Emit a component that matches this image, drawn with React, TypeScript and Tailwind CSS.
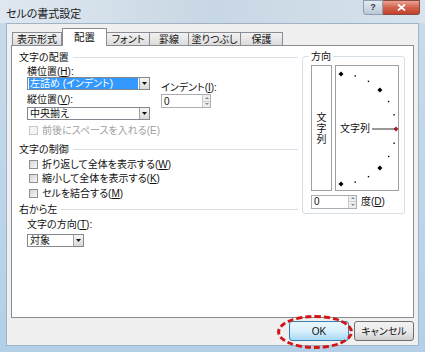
import React from 'react'

const U = ({ children }: { children: React.ReactNode }) => <span className="underline">{children}</span>

const Arrow = () => (
  <div className="w-[10px] h-full flex items-center justify-center bg-gradient-to-b from-[#f6f6f6] to-[#d9d9d9] border-l border-[#a0a0a0]">
    <svg width="5" height="3" viewBox="0 0 5 3"><path d="M0 0H5L2.5 3Z" fill="#111" /></svg>
  </div>
)

const Combo = ({ w, text, selected }: { w: string; text: string; selected?: boolean }) => (
  <div className={`${w} h-[13px] flex border border-[#828790] bg-white`}>
    <div className="flex-1 flex items-center px-[1px]">
      <div className={`h-full flex-1 flex items-center pl-[1px] ${selected ? 'bg-[#3399ff] text-white' : ''}`}>{text}</div>
    </div>
    <Arrow />
  </div>
)

const Spin = ({ w }: { w: string }) => (
  <div className={`${w} h-[14px] flex border border-[#abadb3] bg-white`}>
    <div className="flex-1 flex items-center pl-[2px]">0</div>
    <div className="w-[8px] flex flex-col border-l border-[#c8c8c8] bg-[#eeeeee]">
      <div className="flex-1 flex items-center justify-center border-b border-[#cfcfcf]">
        <svg width="4" height="2" viewBox="0 0 4 2"><path d="M0 2H4L2 0Z" fill="#7a8a99" /></svg>
      </div>
      <div className="flex-1 flex items-center justify-center">
        <svg width="4" height="2" viewBox="0 0 4 2"><path d="M0 0H4L2 2Z" fill="#7a8a99" /></svg>
      </div>
    </div>
  </div>
)

const Check = ({ children, disabled, className }: { children: React.ReactNode; disabled?: boolean; className: string }) => (
  <div className={`${className} h-[12px] flex items-center pl-[2px] ${disabled ? 'text-[#a0a0a0]' : ''}`}>
    <div className={`w-[9px] h-[9px] border ${disabled ? 'border-[#c8c8c8] bg-[#f4f4f4]' : 'border-[#8f8f8f] bg-gradient-to-br from-[#d4d4d4] to-[#f8f8f8]'}`} />
    <span className="ml-[4px]">{children}</span>
  </div>
)

const Header = ({ text, className }: { text: string; className: string }) => (
  <div className={`${className} h-[12px] flex items-center`}>
    <span>{text}</span>
    <div className="flex-1 h-px bg-[#d5dfe5] ml-[4px] mr-[4px]" />
  </div>
)

const Dial = () => {
  const cx = 5
  const cy = 63
  const r = 55
  const pts = [90, 75, 60, 45, 30, 15, 0, -15, -30, -45, -60, -75, -90].map((a) => {
    const rad = (a * Math.PI) / 180
    return { a, x: cx + r * Math.cos(rad), y: cy - r * Math.sin(rad) }
  })
  return (
    <svg className="absolute inset-0" width="64" height="126" viewBox="0 0 64 126">
      <line x1="36" y1="63" x2="59" y2="63" stroke="#333" strokeWidth="1" />
      {pts.map((p) =>
        p.a % 45 === 0 ? (
          <path
            key={p.a}
            d={`M${p.x} ${p.y - 2.5}L${p.x + 2.5} ${p.y}L${p.x} ${p.y + 2.5}L${p.x - 2.5} ${p.y}Z`}
            fill={p.a === 0 ? '#a02020' : '#000'}
          />
        ) : (
          <rect key={p.a} x={p.x - 0.7} y={p.y - 0.7} width="1.4" height="1.4" fill="#000" />
        )
      )}
    </svg>
  )
}

export default function App() {
  const tabs = [
    { t: '表示形式', w: 'w-[50px]' },
    { t: '配置', w: 'w-[45px]', sel: true },
    { t: 'フォント', w: 'w-[44px]' },
    { t: '罫線', w: 'w-[40px]' },
    { t: '塗りつぶし', w: 'w-[53px]' },
    { t: '保護', w: 'w-[43px]' },
  ]

  return (
    <div className="w-[425px] h-[352px] flex flex-col bg-gradient-to-b from-[#c9dbea] to-[#b3d0e8] font-['Liberation_Sans','Noto_Sans_CJK_JP',sans-serif] [font-feature-settings:'palt'] text-[10px] text-[#111] overflow-hidden">
      {/* タイトルバー */}
      <div className="h-[23px] flex items-start bg-gradient-to-r from-[#dfe8f0] via-[#c8d7e4] to-[#d7e3ee]">
        <div className="pl-[6px] pt-[6px] text-[11px] text-[#1a1a1a]">セルの書式設定</div>
        <div className="ml-auto mr-[5px] flex">
          <div className="w-[20px] h-[15px] flex items-center justify-center rounded-bl-[3px] border border-[#8a9cae] bg-gradient-to-b from-[#e4ebf2] to-[#b9c9d8] text-[9px] text-[#334] font-bold">?</div>
          <div className="w-[37px] h-[15px] flex items-center justify-center rounded-br-[3px] border border-l-0 border-[#8a4a40] bg-gradient-to-b from-[#e8a393] via-[#d2624e] to-[#c2402c]">
            <svg width="9" height="7" viewBox="0 0 9 7"><path d="M1 0.5L8 6.5M8 0.5L1 6.5" stroke="#fff" strokeWidth="1.8" /></svg>
          </div>
        </div>
      </div>

      {/* 本体 */}
      <div className="mx-[6px] mb-[6px] flex-1 flex flex-col bg-[#f0f0f0] border border-[#9fb3c6] relative">
        <div className="mt-[4px] pl-[5px] h-[17px] flex items-end relative z-10">
          {tabs.map((tab) => (
            <div
              key={tab.t}
              className={`${tab.w} flex items-center justify-center border border-[#898c95] ${
                tab.sel ? 'h-[18px] -mb-px bg-white border-b-0 text-[10.5px]' : 'h-[13px] border-b-0 bg-gradient-to-b from-[#f2f2f2] to-[#dcdcdc] -ml-px first:ml-0'
              }`}
            >
              {tab.t}
            </div>
          ))}
        </div>

        <div className="mx-[4px] h-[273px] flex bg-white border border-[#898c95]">
          {/* 左側 */}
          <div className="flex-1 flex flex-col pl-[7px]">
            <Header text="文字の配置" className="mt-[5px]" />
            <div className="flex pl-[8px]">
              <div className="flex flex-col w-[123px]">
                <div className="mt-[2px] h-[12px] flex items-center">横位置(<U>H</U>):</div>
                <Combo w="w-[123px]" text="左詰め (インデント)" selected />
                <div className="mt-[3px] h-[12px] flex items-center">縦位置(<U>V</U>):</div>
                <div className="mt-[2px]">
                  <Combo w="w-[123px]" text="中央揃え" />
                </div>
              </div>
              <div className="flex flex-col ml-[11px] mt-[18px]">
                <div className="h-[12px] flex items-center">インデント(<U>I</U>):</div>
                <div className="mt-[1px]">
                  <Spin w="w-[50px]" />
                </div>
              </div>
            </div>
            <div className="pl-[8px] flex flex-col">
              <Check className="mt-[4px]" disabled>前後にスペースを入れる(E)</Check>
            </div>
            <Header text="文字の制御" className="mt-[7px]" />
            <div className="pl-[8px] flex flex-col">
              <Check className="mt-[3px]">折り返して全体を表示する(<U>W</U>)</Check>
              <Check className="mt-[2px]">縮小して全体を表示する(<U>K</U>)</Check>
              <Check className="mt-[3px]">セルを結合する(<U>M</U>)</Check>
            </div>
            <Header text="右から左" className="mt-[4px]" />
            <div className="pl-[8px] flex flex-col">
              <div className="mt-[3px] h-[12px] flex items-center">文字の方向(<U>T</U>):</div>
              <div className="mt-[4px]">
                <Combo w="w-[57px]" text="対象" />
              </div>
            </div>
          </div>

          {/* 方向 */}
          <div className="w-[103px] mr-[8px] mt-[10px] self-start relative border border-[#d5dfe5] rounded-[3px] pt-[8px] pl-[8px] pr-[5px] pb-[4px]">
            <div className="absolute -top-[7px] left-[6px] px-[2px] bg-white h-[12px] flex items-center">方向</div>
            <div className="flex gap-[3px]">
              <div className="w-[21px] h-[126px] border border-[#a0a0a0] flex flex-col items-center justify-center leading-[11px]">
                <span>文</span>
                <span>字</span>
                <span>列</span>
              </div>
              <div className="w-[64px] h-[126px] border border-[#a0a0a0] relative flex items-center pl-[4px]">
                <Dial />
                <span className="relative">文字列</span>
              </div>
            </div>
            <div className="mt-[3px] flex items-center">
              <Spin w="w-[46px]" />
              <span className="ml-[4px]">度(<U>D</U>)</span>
            </div>
          </div>
        </div>

        {/* ボタン */}
        <div className="mt-[3px] pr-[4px] flex justify-end gap-[5px]">
          <div className="w-[60px] h-[20px] flex items-center justify-center rounded-[3px] border border-[#3c7fb1] bg-gradient-to-b from-[#eaf6fd] via-[#d9f0fc] to-[#a7d9f5]">OK</div>
          <div className="w-[60px] h-[20px] flex items-center justify-center rounded-[3px] border border-[#707070] bg-gradient-to-b from-[#f2f2f2] via-[#ebebeb] to-[#cfcfcf]">キャンセル</div>
        </div>

        {/* 赤い点線の丸 */}
        <div className="absolute left-[270px] top-[291px] w-[76px] h-[34px] rounded-[50%] border-[3px] border-dashed border-[#d41414]" />
      </div>
    </div>
  )
}
